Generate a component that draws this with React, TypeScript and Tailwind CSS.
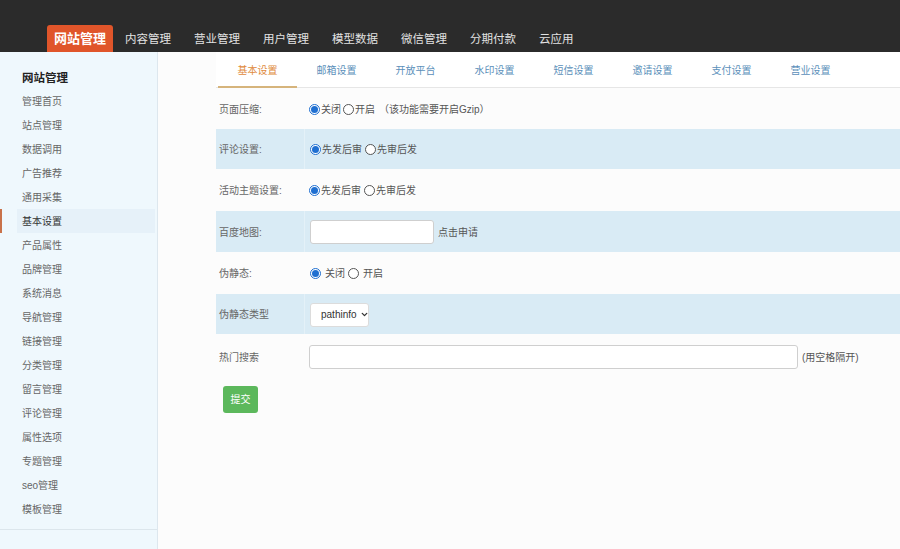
import { ChevronDown } from "lucide-react";

const topNav = ["内容管理", "营业管理", "用户管理", "模型数据", "微信管理", "分期付款", "云应用"];
const sideItems = [
  "管理首页",
  "站点管理",
  "数据调用",
  "广告推荐",
  "通用采集",
  "基本设置",
  "产品属性",
  "品牌管理",
  "系统消息",
  "导航管理",
  "链接管理",
  "分类管理",
  "留言管理",
  "评论管理",
  "属性选项",
  "专题管理",
  "seo管理",
  "模板管理",
];
const tabs = ["基本设置", "邮箱设置", "开放平台", "水印设置", "短信设置", "邀请设置", "支付设置", "营业设置"];

function Radio({ checked }: { checked?: boolean }) {
  return checked ? (
    <span className="inline-flex w-[11px] h-[11px] rounded-full border border-[#1f6fd1] bg-white items-center justify-center shrink-0">
      <span className="w-[7px] h-[7px] rounded-full bg-[#1f6fd1]" />
    </span>
  ) : (
    <span className="inline-block w-[11px] h-[11px] rounded-full border border-[#555] bg-white shrink-0" />
  );
}

function Row({ label, blue, children, h = "h-[41px]" }: { label: string; blue?: boolean; children?: React.ReactNode; h?: string }) {
  return (
    <div className={`flex ${h} ${blue ? "bg-[#d9ebf5]" : ""}`}>
      <div className="w-[88px] pl-[3px] pt-[1px] flex items-center text-[#666]">{label}</div>
      <div className={`flex-1 pl-[5px] pt-[1px] flex items-center text-[#555] ${blue ? "border-l border-[#e4f1f8]" : ""}`}>
        {children}
      </div>
    </div>
  );
}

export default function App() {
  return (
    <div
      className="w-full h-[549px] flex flex-col overflow-hidden text-[10px]"
      style={{ fontFamily: '"Liberation Sans", "Noto Sans CJK SC", sans-serif' }}
    >
      {/* Top bar */}
      <div className="h-[52px] bg-[#2b2b2b] flex items-end pl-[47px] shrink-0">
        <div className="h-[27px] w-[66px] bg-[#e0552a] rounded-t-[3px] flex items-center justify-center pt-[1px] text-white font-bold text-[13px]">
          网站管理
        </div>
        <div className="flex h-[27px] items-center pt-[3px] pl-[12px]">
          {topNav.map((t) => (
            <div key={t} className="w-[69px] text-[#e2e2e2] text-[11.5px]">
              {t}
            </div>
          ))}
        </div>
      </div>

      <div className="flex flex-1 min-h-0">
        {/* Sidebar */}
        <div className="w-[158px] bg-[#eff8fd] border-r border-[#dde7ee] shrink-0">
          <div className="pt-[13px] pb-[8px] border-b border-[#dce6ec]">
            <div className="h-[24px] flex items-center pt-[4px] pl-[22px] text-[11.5px] font-bold text-[#222]">网站管理</div>
            {sideItems.map((s) =>
              s === "基本设置" ? (
                <div key={s} className="h-[24px] flex">
                  <div className="w-[2px] bg-[#c9724a]" />
                  <div className="ml-[15px] mr-[2px] flex-1 bg-[#e6f1f9] pl-[5px] flex items-center text-[#333]">{s}</div>
                </div>
              ) : (
                <div key={s} className="h-[24px] flex items-center pl-[22px] text-[#666]">
                  {s}
                </div>
              )
            )}
          </div>
        </div>

        {/* Main */}
        <div className="flex-1 bg-[#fcfcfc] pl-[58px]">
          <div className="flex h-[36px] border-b border-[#e6e6e6] pl-[2px] bg-white">
            {tabs.map((t, i) => (
              <div
                key={t}
                className={`w-[79px] flex items-center justify-center pt-[2px] ${
                  i === 0 ? "text-[#e08a3c] border-b-2 border-[#d6b47c] -mb-[1px]" : "text-[#5b8fba]"
                }`}
              >
                {t}
              </div>
            ))}
          </div>

          <Row label="页面压缩:">
            <Radio checked />
            <span className="ml-[1px]">关闭</span>
            <span className="ml-[2px] flex items-center">
              <Radio />
            </span>
            <span className="ml-[1px]">开启</span>
            <span className="ml-[4px]">（该功能需要开启Gzip）</span>
          </Row>
          <Row label="评论设置:" blue h="h-[40px]">
            <Radio checked />
            <span className="ml-[1px]">先发后审</span>
            <span className="ml-[3px] flex items-center">
              <Radio />
            </span>
            <span className="ml-[1px]">先审后发</span>
          </Row>
          <Row label="活动主题设置:" h="h-[42px]">
            <Radio checked />
            <span className="ml-[1px]">先发后审</span>
            <span className="ml-[3px] flex items-center">
              <Radio />
            </span>
            <span className="ml-[1px]">先审后发</span>
          </Row>
          <Row label="百度地图:" blue>
            <div className="w-[124px] h-[24px] bg-white border border-[#cfcfcf] rounded-[3px]" />
            <span className="ml-[4px]">点击申请</span>
          </Row>
          <Row label="伪静态:" h="h-[42px]">
            <span className="ml-[1px] flex items-center">
              <Radio checked />
            </span>
            <span className="ml-[4px]">关闭</span>
            <span className="ml-[3px] flex items-center">
              <Radio />
            </span>
            <span className="ml-[4px]">开启</span>
          </Row>
          <Row label="伪静态类型" blue h="h-[40px]">
            <div className="w-[59px] h-[24px] bg-white border border-[#dcdcdc] rounded-[3px] flex items-center pl-[10px] text-[#333]">
              <span>pathinfo</span>
              <ChevronDown className="w-[9px] h-[9px] ml-[3px] shrink-0" strokeWidth={3.5} />
            </div>
          </Row>
          <Row label="热门搜索" h="h-[45px]">
            <div className="w-[489px] h-[24px] bg-white border border-[#cfcfcf] rounded-[3px]" />
            <span className="ml-[4px]">(用空格隔开)</span>
          </Row>
          <div className="pl-[7px] pt-[7px]">
            <button className="w-[35px] h-[27px] rounded-[3px] bg-[#5cb85c] text-white text-[10px]">提交</button>
          </div>
        </div>
      </div>
    </div>
  );
}
